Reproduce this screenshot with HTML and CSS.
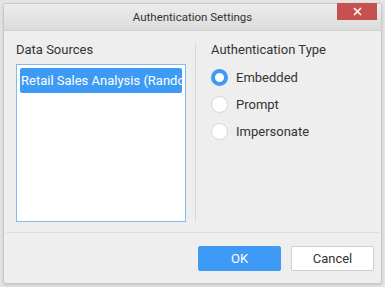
FILE: index.html
```html
<!DOCTYPE html>
<html lang="en">
<head>
    <meta charset="UTF-8">
    <title>Authentication Settings</title>
    <link rel="stylesheet" href="styles.css">
</head>
<body>
    <div class="dialog">
        <div class="dialog-header">
            <span class="dialog-title">Authentication Settings</span>
            <button class="close-btn" aria-label="Close">
                <svg width="9" height="9" viewBox="0 0 9 9">
                    <path d="M1 1L8 8M8 1L1 8" stroke="#fff" stroke-width="1.6"/>
                </svg>
            </button>
        </div>

        <div class="dialog-body">
            <div class="sources">
                <h3 class="label">Data Sources</h3>
                <div class="listbox">
                    <div class="list-item selected">Retail Sales Analysis (Random)</div>
                </div>
            </div>
            <div class="divider"></div>
            <div class="auth">
                <h3 class="label">Authentication Type</h3>
                <label class="radio"><span class="dot checked"></span>Embedded</label>
                <label class="radio"><span class="dot"></span>Prompt</label>
                <label class="radio"><span class="dot"></span>Impersonate</label>
            </div>
        </div>

        <div class="dialog-footer">
            <button class="btn btn-primary">OK</button>
            <button class="btn">Cancel</button>
        </div>
    </div>
</body>
</html>
```

FILE: styles.css
```css
* {
    margin: 0;
    padding: 0;
    box-sizing: border-box;
}

body {
    background: #e4e4e4;
    font-family: Roboto, 'Noto Sans', sans-serif;
    padding: 3px 3px 0 3px;
    height: 287px;
    overflow: hidden;
}

/* Ventana del dialogo */
.dialog {
    width: 379px;
    height: 281px;
    background: #eeeeee;
    border: 1px solid #c8c8c8;
    border-radius: 3px;
    box-shadow: 0 1px 3px rgba(0, 0, 0, 0.15);
    display: flex;
    flex-direction: column;
}

.dialog-header {
    height: 27px;
    background: linear-gradient(#ececec, #dcdcdc);
    border-bottom: 1px solid #d2d2d2;
    display: flex;
    align-items: center;
    justify-content: center;
    position: relative;
}

.dialog-title {
    font-family: Roboto, sans-serif;
    font-size: 11.5px;
    color: #333;
}

.close-btn {
    position: absolute;
    top: -1px;
    right: 4px;
    width: 40px;
    height: 17px;
    border: none;
    background: #c75050;
    display: flex;
    align-items: center;
    justify-content: center;
}

.dialog-body {
    display: flex;
    padding: 11px 12px 0 10px;
    height: 202px;
    border-bottom: 1px solid #dedede;
    margin: 0 2px;
}

.label {
    font-weight: normal;
    font-size: 13px;
    color: #333;
    margin-bottom: 6px;
    line-height: 16px;
}

.sources {
    width: 170px;
    display: flex;
    flex-direction: column;
}

.listbox {
    height: 158px;
    background: #fff;
    border: 1px solid #82bbf2;
    padding: 3px;
}

.list-item {
    height: 25px;
    line-height: 25px;
    font-size: 13px;
    padding-left: 1px;
    white-space: nowrap;
    overflow: hidden;
    border-radius: 2px;
}

.list-item.selected {
    background: #3d9af5;
    color: #fff;
}

.divider {
    width: 1px;
    height: 178px;
    margin: 2px 15px 0 9px;
    background: #d8d8d8;
}

.auth {
    display: flex;
    flex-direction: column;
}

.radio {
    display: flex;
    align-items: center;
    font-size: 13px;
    color: #333;
    height: 27px;
}

.dot {
    width: 17px;
    height: 17px;
    border-radius: 50%;
    background: #fff;
    border: 1px solid #d6d6d6;
    margin-right: 8px;
}

.dot.checked {
    border: 4px solid #3d9af5;
}

.dialog-footer {
    flex: 1;
    display: flex;
    justify-content: flex-end;
    align-items: center;
    gap: 10px;
    padding-right: 7px;
}

.btn {
    width: 83px;
    height: 25px;
    font-family: Roboto, sans-serif;
    font-size: 13px;
    color: #333;
    background: #fff;
    border: 1px solid #cfcfcf;
    border-radius: 2px;
}

.btn-primary {
    background: #3d9af5;
    border-color: #3d9af5;
    color: #fff;
}
```
